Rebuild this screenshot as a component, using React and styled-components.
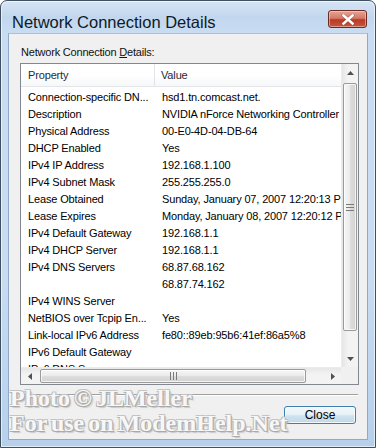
import React from 'react';
import styled, { createGlobalStyle } from 'styled-components';

const GlobalStyle = createGlobalStyle`
  html, body {
    margin: 0;
    padding: 0;
    background: #ffffff;
  }
  * {
    box-sizing: border-box;
  }
`;

const Window = styled.div`
  position: relative;
  width: 376px;
  height: 448px;
  display: flex;
  flex-direction: column;
  padding: 0 7px 7px 7px;
  border: 1px solid #3f5061;
  border-radius: 7px 7px 0 0;
  background: linear-gradient(
    180deg,
    #d6e5f5 0px,
    #c2d7ee 16px,
    #c8dcf2 32px,
    #c9ddf2 60%,
    #b6d0ec 100%
  );
  box-shadow: inset 0 0 0 1px rgba(255, 255, 255, 0.6);
`;

const TitleBar = styled.div`
  height: 32px;
  display: flex;
  align-items: flex-start;
  justify-content: space-between;
`;

const Title = styled.div`
  font-family: "Liberation Sans", Arial, sans-serif;
  font-size: 16.5px;
  color: #0e1a26;
  padding: 12px 0 0 4px;
  line-height: 18px;
`;

const CloseX = styled.div`
  width: 39px;
  height: 18px;
  margin-top: 9px;
  margin-right: 1px;
  border: 1px solid #6b2a22;
  border-radius: 3px;
  display: flex;
  align-items: center;
  justify-content: center;
  background: linear-gradient(180deg, #e7a395 0%, #d47a68 45%, #b83b26 55%, #c6563f 100%);
  box-shadow: inset 0 0 0 1px rgba(255, 220, 210, 0.5);
`;

const Client = styled.div`
  position: relative;
  flex: 1;
  display: flex;
  flex-direction: column;
  padding: 11px 10px 0 11px;
  background: #f0f0f0;
  border: 1px solid #8fa9c6;
  border-top-color: #a9c0d9;
  overflow: hidden;
`;

const Label = styled.div`
  font-family: "Liberation Sans", Arial, sans-serif;
  font-size: 11px;
  line-height: 15px;
  letter-spacing: -0.2px;
  color: #111;
  padding-left: 1px;

  u {
    text-decoration: underline;
    text-underline-offset: 1px;
  }
`;

const ListBox = styled.div`
  margin-top: 3px;
  width: 339px;
  height: 322px;
  border: 1px solid #828790;
  background: #ffffff;
  display: grid;
  grid-template-columns: 320px 17px;
  grid-template-rows: 303px 17px;
`;

const Content = styled.div`
  overflow: hidden;
  display: flex;
  flex-direction: column;
  font-family: "Liberation Sans", Arial, sans-serif;
  font-size: 11px;
  letter-spacing: -0.15px;
  color: #000;
`;

const Header = styled.div`
  height: 23px;
  flex-shrink: 0;
  display: grid;
  grid-template-columns: 134px 1fr;
  border-bottom: 1px solid #e3e5e8;
  background: linear-gradient(180deg, #ffffff 0%, #ffffff 50%, #f6f7f8 100%);
`;

const HeaderCell = styled.div`
  display: flex;
  align-items: center;
  padding-left: ${(p) => p.$pad}px;
  border-right: ${(p) => (p.$divider ? '1px solid #e0e3e7' : 'none')};
  color: #1e2a36;
`;

const Rows = styled.div`
  padding-top: 2px;
`;

const Row = styled.div`
  height: 17px;
  display: grid;
  grid-template-columns: 135px 185px;
  align-items: center;
  white-space: nowrap;
`;

const Cell = styled.div`
  overflow: hidden;
  padding-left: ${(p) => p.$pad}px;
  line-height: 17px;
`;

const VScroll = styled.div`
  display: flex;
  flex-direction: column;
  background: linear-gradient(90deg, #e6e6e6 0%, #f3f3f3 40%, #f3f3f3 100%);
  border-left: 1px solid #ececec;
`;

const HScroll = styled.div`
  display: flex;
  align-items: stretch;
  background: linear-gradient(180deg, #e6e6e6 0%, #f3f3f3 40%, #f3f3f3 100%);
  border-top: 1px solid #ececec;
`;

const Corner = styled.div`
  background: #f0f0f0;
`;

const ArrowButton = styled.div`
  width: ${(p) => (p.$horizontal ? '17px' : '100%')};
  height: ${(p) => (p.$horizontal ? '100%' : '17px')};
  flex-shrink: 0;
  display: flex;
  align-items: center;
  justify-content: center;
`;

const Thumb = styled.div`
  flex-shrink: 0;
  width: ${(p) => (p.$horizontal ? `${p.$size}px` : 'auto')};
  height: ${(p) => (p.$horizontal ? 'auto' : `${p.$size}px`)};
  align-self: stretch;
  margin-left: ${(p) => (p.$horizontal ? '2px' : '1px')};
  margin-right: ${(p) => (p.$horizontal ? '0' : '1px')};
  margin-top: ${(p) => (p.$horizontal ? '1px' : '2px')};
  margin-bottom: ${(p) => (p.$horizontal ? '1px' : '0')};
  border: 1px solid #9a9a9a;
  border-radius: 2px;
  display: flex;
  align-items: center;
  justify-content: center;
  background: ${(p) =>
    p.$horizontal
      ? 'linear-gradient(180deg, #f6f6f6 0%, #ececec 45%, #dcdcdc 55%, #d3d3d3 100%)'
      : 'linear-gradient(90deg, #f6f6f6 0%, #ececec 45%, #dcdcdc 55%, #d3d3d3 100%)'};
  box-shadow: inset 0 0 0 1px rgba(255, 255, 255, 0.7);
`;

const Spacer = styled.div`
  flex: 1;
`;

const Separator = styled.div`
  margin-top: 9px;
  width: 337px;
  margin-left: 1px;
  height: 2px;
  border-top: 1px solid #a0a0a0;
  border-bottom: 1px solid #ffffff;
`;

const Footer = styled.div`
  display: flex;
  justify-content: flex-end;
  padding-top: 10px;
  padding-right: 1px;
`;

const Button = styled.button`
  width: 72px;
  height: 18px;
  padding: 0;
  font-family: "Liberation Sans", Arial, sans-serif;
  font-size: 12px;
  color: #000;
  border: 1px solid #3c7fb1;
  border-radius: 3px;
  background: linear-gradient(180deg, #f3f8fb 0%, #e8f2f8 45%, #cfe3ef 55%, #bfd9ea 100%);
  box-shadow: inset 0 0 0 1px rgba(255, 255, 255, 0.8);
  line-height: 16px;
`;

const Watermark = styled.div`
  position: absolute;
  left: 1px;
  bottom: 3px;
  font-family: "Liberation Serif", "Times New Roman", serif;
  font-weight: bold;
  font-size: 24px;
  line-height: 25px;
  word-spacing: -2px;
  color: #f7f7f7;
  text-shadow:
    1px 1px 0 #a9a9a9,
    -1px -1px 0 #c4c4c4,
    1px -1px 0 #c4c4c4,
    -1px 1px 0 #b4b4b4,
    2px 2px 1px #c8c8c8;
  pointer-events: none;
  white-space: nowrap;
`;

const rows = [
  ['Connection-specific DN...', 'hsd1.tn.comcast.net.'],
  ['Description', 'NVIDIA nForce Networking Controller'],
  ['Physical Address', '00-E0-4D-04-DB-64'],
  ['DHCP Enabled', 'Yes'],
  ['IPv4 IP Address', '192.168.1.100'],
  ['IPv4 Subnet Mask', '255.255.255.0'],
  ['Lease Obtained', 'Sunday, January 07, 2007 12:20:13 PM'],
  ['Lease Expires', 'Monday, January 08, 2007 12:20:12 PM'],
  ['IPv4 Default Gateway', '192.168.1.1'],
  ['IPv4 DHCP Server', '192.168.1.1'],
  ['IPv4 DNS Servers', '68.87.68.162'],
  ['', '68.87.74.162'],
  ['IPv4 WINS Server', ''],
  ['NetBIOS over Tcpip En...', 'Yes'],
  ['Link-local IPv6 Address', 'fe80::89eb:95b6:41ef:86a5%8'],
  ['IPv6 Default Gateway', ''],
  ['IPv6 DNS Servers', ''],
];

// small scrollbar arrow, dir = up | down | left | right
const Arrow = ({ dir }) => {
  const pts = {
    up: '0,4 3.5,0 7,4',
    down: '0,0 3.5,4 7,0',
    left: '4,0 0,3.5 4,7',
    right: '0,0 4,3.5 0,7',
  }[dir];
  const vertical = dir === 'up' || dir === 'down';
  return (
    <svg width={vertical ? 7 : 4} height={vertical ? 4 : 7} viewBox={vertical ? '0 0 7 4' : '0 0 4 7'}>
      <polygon points={pts} fill="#505050" />
    </svg>
  );
};

const Grip = ({ horizontal }) =>
  horizontal ? (
    <svg width="7" height="8" viewBox="0 0 7 8">
      <path d="M0.5 0v8M3.5 0v8M6.5 0v8" stroke="#7a7a7a" strokeWidth="1" />
    </svg>
  ) : (
    <svg width="8" height="7" viewBox="0 0 8 7">
      <path d="M0 0.5h8M0 3.5h8M0 6.5h8" stroke="#7a7a7a" strokeWidth="1" />
    </svg>
  );

const App = () => {
  return (
    <>
      <GlobalStyle />
      <Window>
        <TitleBar>
          <Title>Network Connection Details</Title>
          <CloseX>
            <svg width="14" height="11" viewBox="0 0 14 11">
              <path d="M2.5 1.5l9 8M11.5 1.5l-9 8" stroke="#5a1a10" strokeWidth="3.6" strokeLinecap="square" opacity="0.35" />
              <path d="M2.5 1.5l9 8M11.5 1.5l-9 8" stroke="#ffffff" strokeWidth="2.6" strokeLinecap="square" />
            </svg>
          </CloseX>
        </TitleBar>
        <Client>
          <Label>
            Network Connection <u>D</u>etails:
          </Label>
          <ListBox>
            <Content>
              <Header>
                <HeaderCell $pad={7} $divider>Property</HeaderCell>
                <HeaderCell $pad={6}>Value</HeaderCell>
              </Header>
              <Rows>
                {rows.map(([prop, value], i) => (
                  <Row key={i}>
                    <Cell $pad={7}>{prop}</Cell>
                    <Cell $pad={6}>{value}</Cell>
                  </Row>
                ))}
              </Rows>
            </Content>
            <VScroll>
              <ArrowButton>
                <Arrow dir="up" />
              </ArrowButton>
              <Thumb $size={248}>
                <Grip />
              </Thumb>
              <Spacer />
              <ArrowButton>
                <Arrow dir="down" />
              </ArrowButton>
            </VScroll>
            <HScroll>
              <ArrowButton $horizontal>
                <Arrow dir="left" />
              </ArrowButton>
              <Thumb $horizontal $size={266}>
                <Grip horizontal />
              </Thumb>
              <Spacer />
              <ArrowButton $horizontal>
                <Arrow dir="right" />
              </ArrowButton>
            </HScroll>
            <Corner />
          </ListBox>
          <Separator />
          <Footer>
            <Button>Close</Button>
          </Footer>
          <Watermark>
            Photo © JLMeller
            <br />
            For use on ModemHelp.Net
          </Watermark>
        </Client>
      </Window>
    </>
  );
};

export default App;
